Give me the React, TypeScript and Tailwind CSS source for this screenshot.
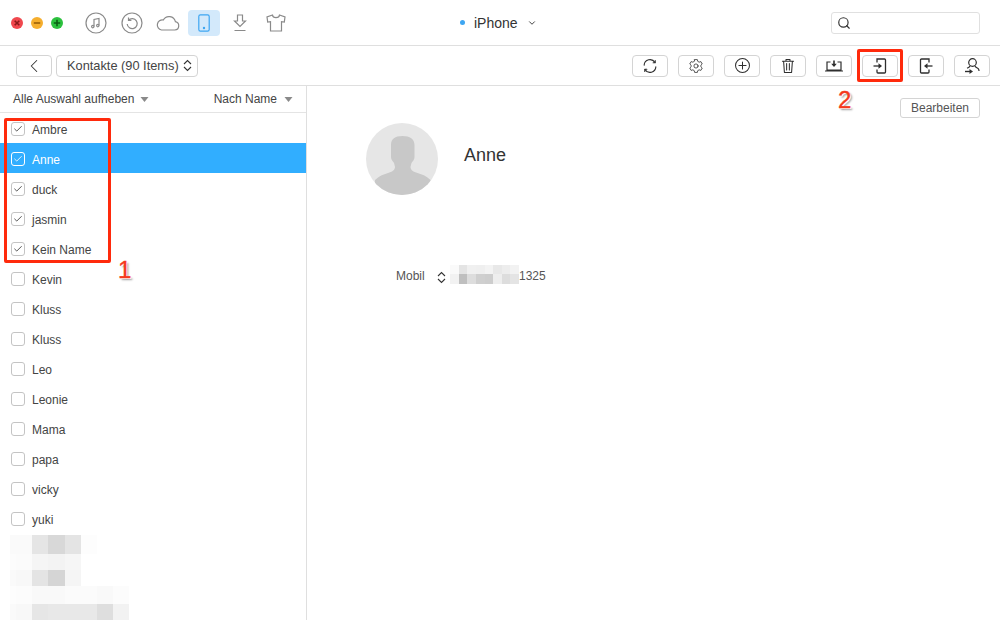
import { ChevronDown, Search, Check, ChevronLeft } from "lucide-react";
import type { ReactNode } from "react";

const contacts = [
  { name: "Ambre", checked: true },
  { name: "Anne", checked: true, active: true },
  { name: "duck", checked: true },
  { name: "jasmin", checked: true },
  { name: "Kein Name", checked: true },
  { name: "Kevin" },
  { name: "Kluss" },
  { name: "Kluss" },
  { name: "Leo" },
  { name: "Leonie" },
  { name: "Mama" },
  { name: "papa" },
  { name: "vicky" },
  { name: "yuki" },
];

const listBlur = [
  { h: "h-[19px]", cells: ["w-[6px] bg-[#fafafa]", "w-[16px] bg-[#fafafa]", "w-[16px] bg-[#e5e5e5]", "w-[17px] bg-[#d8d8d8]", "w-[16px] bg-[#e4e4e4]", "w-[16px] bg-[#fdfdfd]"] },
  { h: "h-[16px]", cells: ["w-[6px] bg-[#fcfcfc]", "w-[16px] bg-[#fbfbfb]", "w-[16px] bg-[#f5f5f5]", "w-[17px] bg-[#f3f3f3]", "w-[16px] bg-[#f6f6f6]"] },
  { h: "h-[16px]", cells: ["w-[6px] bg-[#fafafa]", "w-[16px] bg-[#f8f8f8]", "w-[16px] bg-[#e4e4e4]", "w-[17px] bg-[#d5d5d5]", "w-[16px] bg-[#f5f5f5]"] },
  { h: "h-[18px]", cells: ["w-[6px] bg-[#fdfdfd]", "w-[16px] bg-[#fcfcfc]", "w-[16px] bg-[#f9f9f9]", "w-[17px] bg-[#f9f9f9]", "w-[16px] bg-[#fbfbfb]", "w-[16px] bg-[#fbfbfb]", "w-[16px] bg-[#f9f9f9]", "w-[16px] bg-[#fcfcfc]"] },
  { h: "h-[16px]", cells: ["w-[6px] bg-[#fafafa]", "w-[16px] bg-[#f8f8f8]", "w-[16px] bg-[#e6e6e6]", "w-[17px] bg-[#e8e8e8]", "w-[16px] bg-[#e8e8e8]", "w-[16px] bg-[#e8e8e8]", "w-[16px] bg-[#dedede]", "w-[16px] bg-[#f2f2f2]"] },
];

const phoneBlur = [
  { h: "h-[9px]", cells: ["bg-[#fafafa]", "bg-[#e4e4e4]", "bg-[#f0f0f0]", "bg-[#efefef]", "bg-[#f3f3f3]", "bg-[#e8e8e8]", "bg-[#ededed]", "bg-[#f2f2f2]"] },
  { h: "h-[10px]", cells: ["bg-[#f2f2f2]", "bg-[#bfbfbf]", "bg-[#dddddd]", "bg-[#cfcfcf]", "bg-[#cdcdcd]", "bg-[#eeeeee]", "bg-[#dddddd]", "bg-[#e4e4e4]"] },
];

function Sv({ children, size = 20 }: { children: ReactNode; size?: number }) {
  return (
    <svg width={size} height={size} viewBox="0 0 20 20" fill="none" stroke="currentColor" strokeWidth="1.2" strokeLinecap="round" strokeLinejoin="round">
      {children}
    </svg>
  );
}

function ToolButton({ children }: { children: ReactNode }) {
  return (
    <button className="flex h-[22px] w-9 items-center justify-center rounded-[4px] border border-[#d4d4d4] bg-white text-[#2e2e2e]">
      {children}
    </button>
  );
}

function StepperIcon({ className }: { className?: string }) {
  return (
    <svg width="9" height="13" viewBox="0 0 9 13" fill="none" stroke="currentColor" strokeWidth="1.1" className={className}>
      <path d="M1 5 4.5 1.5 8 5M1 8l3.5 3.5L8 8" />
    </svg>
  );
}

function Checkbox({ checked, active }: { checked?: boolean; active?: boolean }) {
  return (
    <span className={`flex h-[14px] w-[14px] items-center justify-center rounded-[3px] border ${active ? "border-white text-white" : "border-[#c4c4c4] text-[#333]"}`}>
      {checked && <Check size={10} strokeWidth={2} />}
    </span>
  );
}

function ImportIcon() {
  return (
    <svg width="18" height="18" viewBox="0 0 18 18" fill="none" stroke="currentColor" strokeWidth="1.3">
      <path d="M6 5.5V2h7.5a1 1 0 0 1 1 1v12a1 1 0 0 1-1 1H7a1 1 0 0 1-1-1v-2.5" />
      <path d="M2.5 9H8" />
      <path d="M7.5 6.2v5.6L11 9z" fill="currentColor" stroke="none" />
    </svg>
  );
}

function Caret() {
  return (
    <svg width="9" height="5" viewBox="0 0 9 5" fill="#8a8a8a">
      <path d="M.5 0h8L4.5 5z" />
    </svg>
  );
}

export default function App() {
  return (
    <div className="relative h-[620px] w-[1000px] overflow-hidden bg-white text-xs text-[#444] font-['Liberation_Sans',Arial,sans-serif]">
      {/* title bar */}
      <div className="flex h-[46px] items-center border-b border-[#dfdfdf]">
        <div className="ml-[11px] flex w-[64px] gap-2">
          <span className="flex h-3 w-3 items-center justify-center rounded-full bg-[#f0484e] text-[#8c1a1a]">
            <svg width="6" height="6" viewBox="0 0 6 6" stroke="currentColor" strokeWidth="1.6"><path d="M.7.7l4.6 4.6M5.3.7.7 5.3" /></svg>
          </span>
          <span className="flex h-3 w-3 items-center justify-center rounded-full bg-[#f5ae2e] text-[#9a5f0a]">
            <svg width="8" height="6" viewBox="0 0 8 6" stroke="currentColor" strokeWidth="1.6"><path d="M.8 3h6.4" /></svg>
          </span>
          <span className="flex h-3 w-3 items-center justify-center rounded-full bg-[#2cc13e] text-[#0b5f14]">
            <svg width="8" height="8" viewBox="0 0 8 8" stroke="currentColor" strokeWidth="1.6"><path d="M.8 4h6.4M4 .8v6.4" /></svg>
          </span>
        </div>
        <div className="ml-[3px] flex items-center text-[#8a8a8a]">
          <span className="flex w-9 justify-center">
            <svg width="22" height="22" viewBox="0 0 22 22" fill="none" stroke="currentColor" strokeWidth="1.2">
              <circle cx="11" cy="11" r="10" />
              <path d="M9 14.5V7.5l5-1v7" />
              <circle cx="7.8" cy="14.6" r="1.2" />
              <circle cx="12.8" cy="13.6" r="1.2" />
            </svg>
          </span>
          <span className="flex w-9 justify-center">
            <svg width="22" height="22" viewBox="0 0 22 22" fill="none" stroke="currentColor" strokeWidth="1.2">
              <circle cx="11" cy="11" r="10" />
              <path d="M7.5 8.2A5 5 0 1 1 6.2 12M7.5 5.5v2.9h2.9" />
            </svg>
          </span>
          <span className="flex w-9 justify-center">
            <svg width="24" height="16" viewBox="0 0 24 16" fill="none" stroke="currentColor" strokeWidth="1.2">
              <path d="M5.5 15h13.3a4.2 4.2 0 0 0 .6-8.3A6.5 6.5 0 0 0 7.3 5 4.2 4.2 0 0 0 5.5 15z" />
            </svg>
          </span>
          <span className="ml-[2px] flex h-[26px] w-8 items-center justify-center rounded-[4px] bg-[#d3e9fb] text-[#3ea6f2]">
            <svg width="12" height="18" viewBox="0 0 12 18" fill="none" stroke="currentColor" strokeWidth="1.2">
              <rect x=".8" y=".8" width="10.4" height="16.4" rx="1.6" />
              <circle cx="6" cy="14" r=".6" fill="currentColor" />
            </svg>
          </span>
          <span className="ml-[2px] flex w-9 justify-center">
            <svg width="14" height="18" viewBox="0 0 14 18" fill="none" stroke="currentColor" strokeWidth="1.2">
              <path d="M4.5 1h5v6h3L7 12.5 1.5 7h3zM1.5 16.5h11" />
            </svg>
          </span>
          <span className="flex w-9 justify-center">
            <svg width="20" height="18" viewBox="0 0 20 18" fill="none" stroke="currentColor" strokeWidth="1.2">
              <path d="M6.5 1 1 3l.7 5 2.8-.3V17h11V7.7l2.8.3.7-5-5.5-2c-.3 3.5-6.7 3.5-7 0z" />
            </svg>
          </span>
        </div>
        <div className="ml-[166px] flex items-center">
          <span className="h-[5px] w-[5px] rounded-full bg-[#3ea6f2]" />
          <span className="ml-[9px] text-sm text-[#333]">iPhone</span>
          <ChevronDown size={10} strokeWidth={2.2} className="ml-[9px] text-[#333]" />
        </div>
        <div className="ml-auto mr-5 flex h-[22px] w-[149px] items-center rounded-[3px] border border-[#e0e0e0] pl-[5px]">
          <Search size={14} strokeWidth={2} className="text-[#333]" />
        </div>
      </div>

      {/* toolbar */}
      <div className="flex h-10 items-center border-b border-[#dfdfdf] pl-4 pr-[10px]">
        <button className="flex h-[22px] w-9 items-center justify-center rounded-[4px] border border-[#d4d4d4] text-[#333]">
          <ChevronLeft size={22} strokeWidth={1.1} />
        </button>
        <div className="ml-1 flex h-[22px] w-[142px] items-center justify-between rounded-[4px] border border-[#d4d4d4] pl-[10px] pr-[5px] text-[12.8px] text-[#444]">
          <span>Kontakte (90 Items)</span>
          <StepperIcon className="text-[#333]" />
        </div>
        <div className="ml-auto flex gap-[10px]">
          <ToolButton>
            <Sv size={18}>
              <path d="M3.5 9A6.5 6.5 0 0 1 15.5 6M16.5 11A6.5 6.5 0 0 1 4.5 14" />
              <path d="M13.5 6.3h2.3V4M6.5 13.7H4.2V16" />
            </Sv>
          </ToolButton>
          <ToolButton>
            <Sv size={16}>
              <path d="M8.3 2h3.4l.5 2.2 1.7 1 2.2-.7 1.7 3-1.7 1.5v2l1.7 1.5-1.7 3-2.2-.7-1.7 1-.5 2.2H8.3l-.5-2.2-1.7-1-2.2.7-1.7-3L3.9 11V9L2.2 7.5l1.7-3 2.2.7 1.7-1z" strokeWidth="1" />
              <circle cx="10" cy="10" r="2.6" strokeWidth="1" />
            </Sv>
          </ToolButton>
          <ToolButton>
            <Sv size={17}>
              <circle cx="10" cy="10" r="8.2" />
              <path d="M10 5.8v8.4M5.8 10h8.4" />
            </Sv>
          </ToolButton>
          <ToolButton>
            <Sv size={16}>
              <path d="M3 4h14M7.5 4V2h5v2M4.5 4l1 14h9l1-14M8.3 7v8M11.7 7v8" strokeWidth="1.3" />
            </Sv>
          </ToolButton>
          <ToolButton>
            <svg width="20" height="12" viewBox="0 0 20 12" fill="none" stroke="currentColor" strokeWidth="1.2">
              <path d="M6.5 2H3v8h14V2h-3.5M1 11h18" />
              <path d="M10 .5V5" strokeWidth="1.6" />
              <path d="M7.2 3.8h5.6L10 7z" fill="currentColor" stroke="none" />
            </svg>
          </ToolButton>
          <ToolButton>
            <ImportIcon />
          </ToolButton>
          <ToolButton>
            <svg width="18" height="18" viewBox="0 0 18 18" fill="none" stroke="currentColor" strokeWidth="1.3">
              <path d="M12 5.5V2H4.5a1 1 0 0 0-1 1v12a1 1 0 0 0 1 1H11a1 1 0 0 0 1-1v-2.5" />
              <path d="M15.5 9H8.5" />
              <path d="M10.5 6.2v5.6L7 9z" fill="currentColor" stroke="none" />
            </svg>
          </ToolButton>
          <ToolButton>
            <svg width="18" height="18" viewBox="0 0 18 18" fill="none" stroke="currentColor" strokeWidth="1.2">
              <circle cx="9.5" cy="5.5" r="3.8" />
              <path d="M7 8.8C6.7 10.3 5.1 10.5 4.1 11.2M12 8.8c.3 1.6 2.3 1.9 3.5 3.2.4.5.5 1.2.5 2" />
              <path d="M2 14.5h6" strokeWidth="1.4" />
              <path d="M6.5 11.9v5.2L10 14.5z" fill="currentColor" stroke="none" />
            </svg>
          </ToolButton>
        </div>
      </div>

      <div className="flex h-[534px]">
        {/* sidebar */}
        <div className="w-[307px] shrink-0 overflow-hidden border-r border-[#dfdfdf]">
          <div className="flex h-[27px] items-center justify-between border-b border-[#e4e4e4] px-[13px] text-[#444]">
            <div className="flex items-center gap-[6px]">
              <span>Alle Auswahl aufheben</span>
              <Caret />
            </div>
            <div className="flex items-center gap-[7px]">
              <span>Nach Name</span>
              <Caret />
            </div>
          </div>
          <div className="flex h-[30px] flex-col">
            {contacts.map((c, i) => (
              <div
                key={i}
                className={`flex h-[30px] shrink-0 items-center gap-[7px] pl-[11px] pt-[2px] ${c.active ? "bg-[#31aeff] text-white" : "text-[#444]"}`}
              >
                <Checkbox checked={c.checked} active={c.active} />
                <span className="pt-[2px]">{c.name}</span>
              </div>
            ))}
            <div className="mt-[2px] flex shrink-0 flex-col pl-[10px]">
              {listBlur.map((row, i) => (
                <div key={i} className={`flex ${row.h}`}>
                  {row.cells.map((cell, j) => (
                    <span key={j} className={`block h-full ${cell}`} />
                  ))}
                </div>
              ))}
            </div>
          </div>
        </div>

        {/* detail */}
        <div className="flex-1">
          <div className="flex justify-end pr-5 pt-3">
            <button className="h-5 w-20 rounded-[3px] border border-[#d4d4d4] text-[#555]">Bearbeiten</button>
          </div>
          <div className="ml-[59px] mt-[5px] flex">
            <div className="h-[72px] w-[72px] overflow-hidden rounded-full bg-[#e6e6e6]">
              <svg width="72" height="72" viewBox="0 0 72 72" fill="#c8c8c8">
                <path d="M25 22c0-6 4-9 11.5-9s12 3 12 9v12c0 3-2 4-3 6l-1 4c0 3 3 5 7 6 5 1.5 9 3 13 7l1 15H8l1-15c4-4 8-5.5 13-7 4-1 7-3 7-6l-1-4c-1-2-3-3-3-6z" />
              </svg>
            </div>
            <div className="ml-[26px] mt-[20px] text-lg leading-6 text-[#333]">Anne</div>
          </div>
          <div className="ml-[89px] mt-[69px] flex h-5 items-center">
            <span className="w-[41px] pt-1 text-[#555]">Mobil</span>
            <StepperIcon className="mt-[6px] text-[#333]" />
            <div className="ml-[4px] flex w-[69px] flex-col">
              {phoneBlur.map((row, i) => (
                <div key={i} className={`flex ${row.h}`}>
                  {row.cells.map((cell, j) => (
                    <span key={j} className={`block h-full flex-1 ${cell}`} />
                  ))}
                </div>
              ))}
            </div>
            <span className="pt-1 text-[#555]">1325</span>
          </div>
        </div>
      </div>

      {/* annotations */}
      <div className="pointer-events-none absolute left-1 top-[118px] h-[145px] w-[107px] rounded-[2px] border-[3px] border-[#ff2a0c]" />
      <div className="pointer-events-none absolute left-[857px] top-[49px] h-[33px] w-[46px] rounded-[2px] border-[3px] border-[#ff2a0c]" />
      <span className="absolute left-[118px] top-[256px] text-2xl leading-7 text-[#f5391c] [-webkit-text-stroke:0.4px_#f5391c] [text-shadow:1px_1px_0_#fff,2px_2px_2px_#999]">1</span>
      <span className="absolute left-[838px] top-[86px] text-2xl leading-7 text-[#f5391c] [-webkit-text-stroke:0.4px_#f5391c] [text-shadow:1px_1px_0_#fff,2px_2px_2px_#999]">2</span>
    </div>
  );
}
